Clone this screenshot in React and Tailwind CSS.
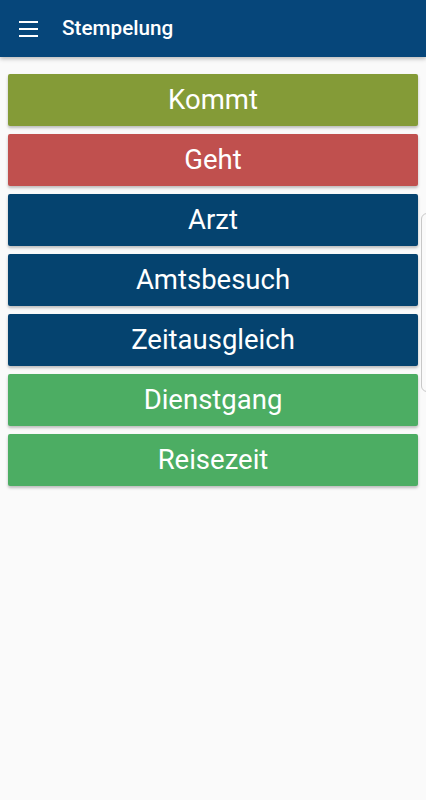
export default function App() {
  const items = [
    { label: "Kommt", cls: "bg-[#849b37]" },
    { label: "Geht", cls: "bg-[#c0504e]" },
    { label: "Arzt", cls: "bg-[#05436f]" },
    { label: "Amtsbesuch", cls: "bg-[#05436f]" },
    { label: "Zeitausgleich", cls: "bg-[#05436f]" },
    { label: "Dienstgang", cls: "bg-[#4cad63]" },
    { label: "Reisezeit", cls: "bg-[#4cad63]" },
  ];
  return (
    <div className="relative w-[426px] h-[800px] bg-[#fafafa] overflow-hidden" style={{ fontFamily: "Roboto, 'Noto Sans', sans-serif" }}>
      <div className="h-[57px] bg-[#06467a] flex items-center shadow-[0_2px_4px_rgba(0,0,0,0.25)] relative z-10">
        <div className="w-[19px] ml-[19px] flex flex-col gap-[5px]">
          <div className="h-[2px] bg-white"></div>
          <div className="h-[2px] bg-white"></div>
          <div className="h-[2px] bg-white"></div>
        </div>
        <div className="ml-[24px] text-white text-[20.7px] font-medium">Stempelung</div>
      </div>
      <div className="flex flex-col gap-[8px] px-[8px] pt-[17px]">
        {items.map((it) => (
          <div
            key={it.label}
            className={`${it.cls} h-[52px] rounded-[2px] flex items-center justify-center text-white text-[27.5px] shadow-[0_2px_3px_rgba(0,0,0,0.25)]`}
          >
            {it.label}
          </div>
        ))}
      </div>
      <div className="absolute left-[421px] top-[213px] w-[12px] h-[179px] rounded-[6px] border border-[#c8c8c8] bg-[#fafafa]"></div>
    </div>
  );
}
